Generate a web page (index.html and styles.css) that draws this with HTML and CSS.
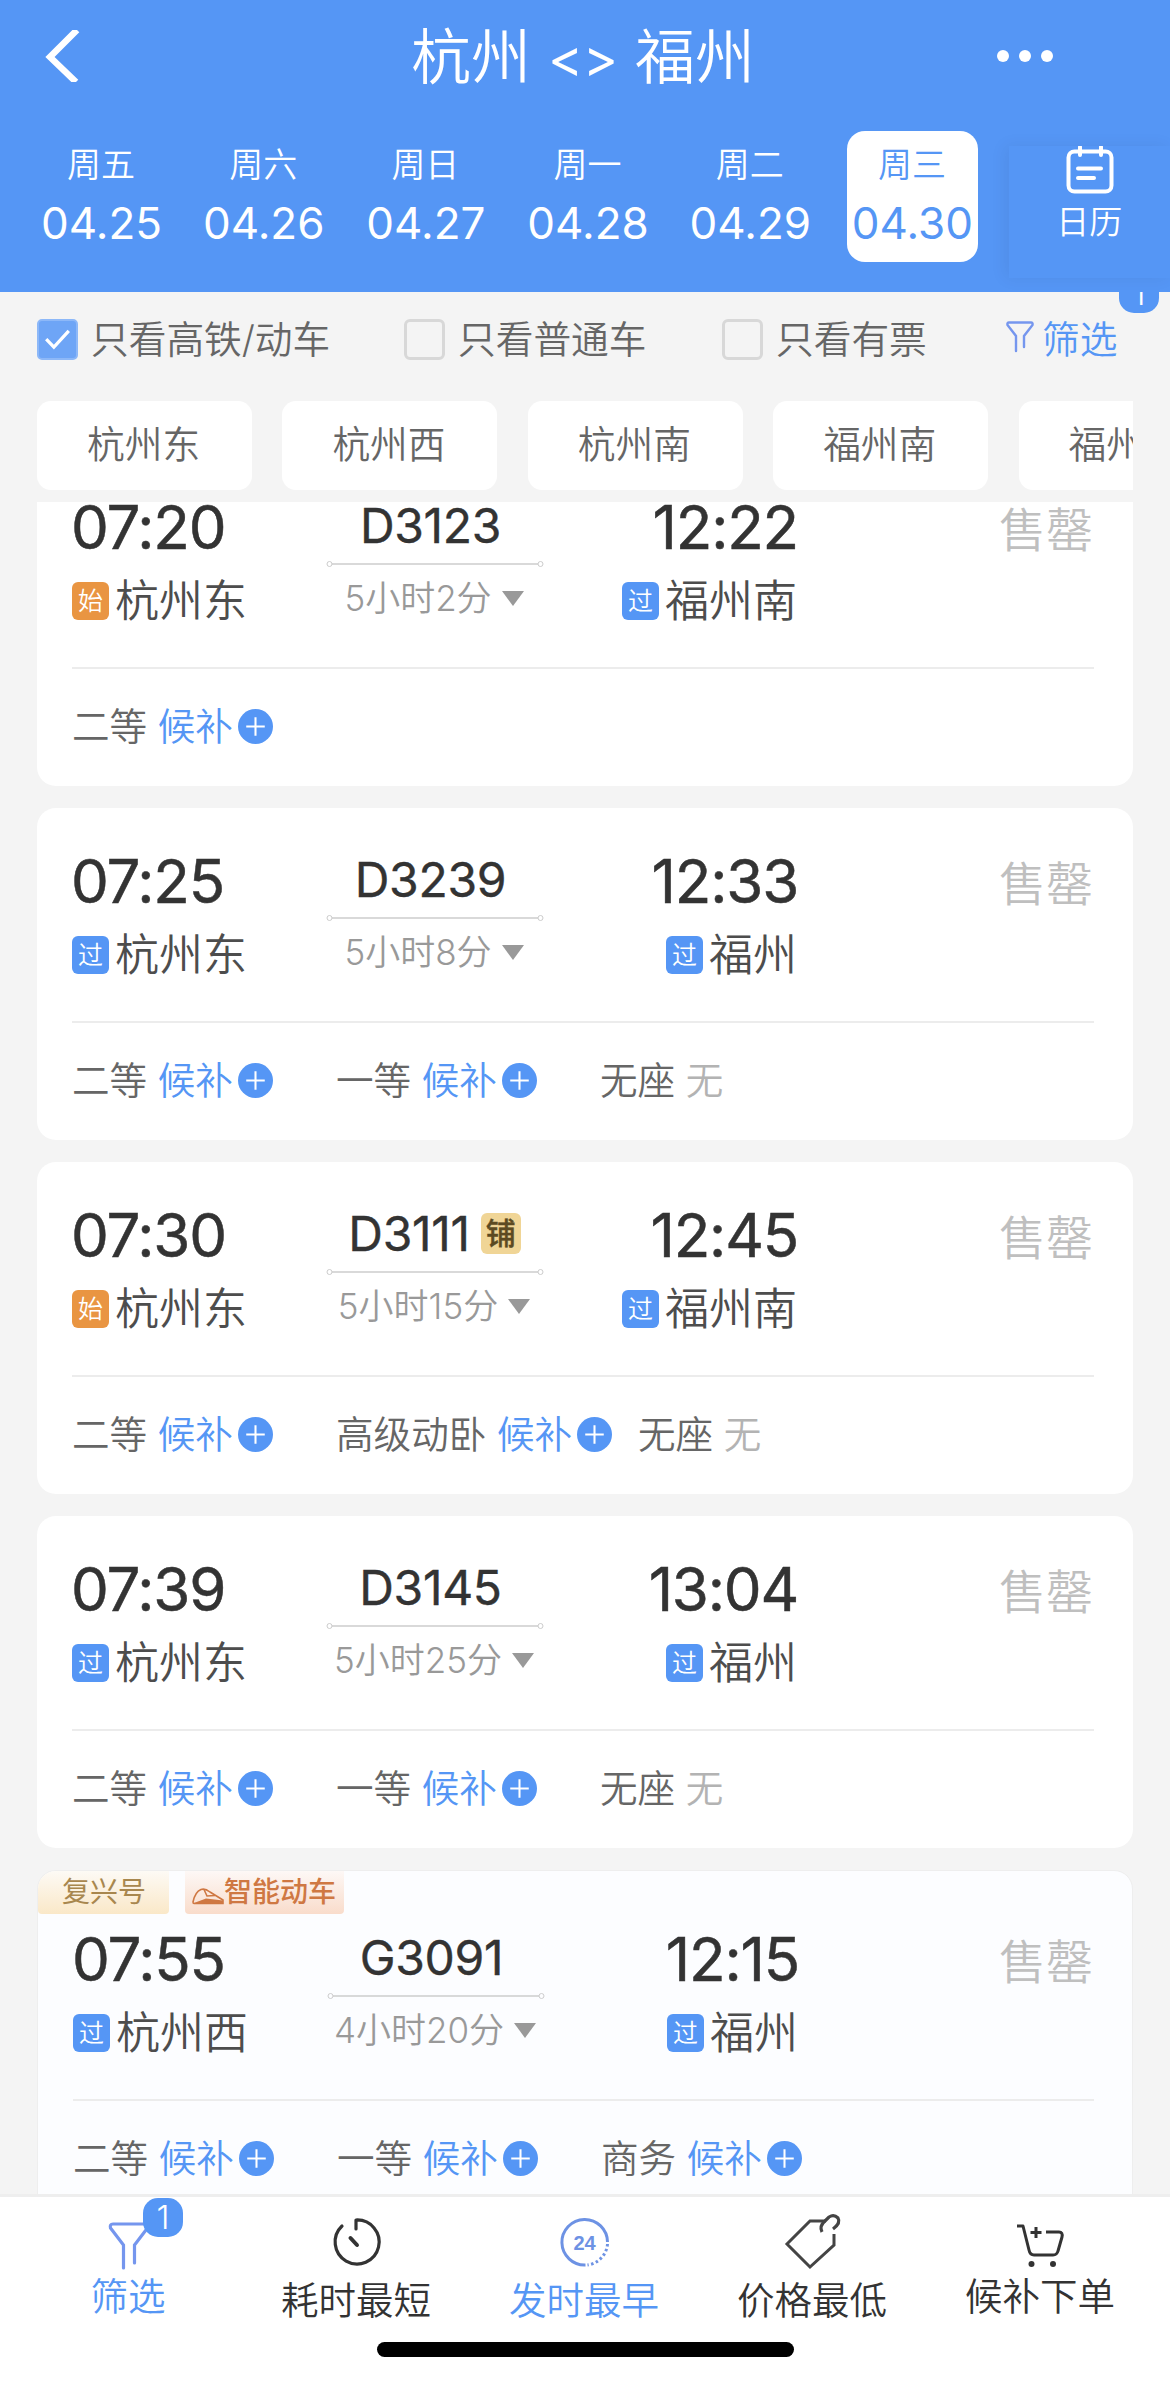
FILE: index.html
```html
<!DOCTYPE html>
<html lang="zh-CN">
<head>
    <meta charset="utf-8">
    <meta name="viewport" content="width=device-width, initial-scale=1">
    <title>杭州 - 福州</title>
    <link rel="stylesheet" href="styles.css">
</head>

<body>
    <!-- shared icons -->
    <svg class="defs" width="0" height="0">
        <symbol id="plus" viewBox="0 0 34 34">
            <circle cx="17" cy="17" r="17" fill="#5596f5"/>
            <path d="M17 8v18M8 17h18" stroke="#fff" stroke-width="2"/>
        </symbol>
        <symbol id="line" viewBox="0 0 218 8">
            <path d="M6 4h206" stroke="#ccc" stroke-width="1.3"/>
            <circle cx="3.5" cy="4" r="2.5" fill="none" stroke="#ccc"/>
            <circle cx="214.5" cy="4" r="2.5" fill="none" stroke="#ccc"/>
        </symbol>
        <symbol id="down" viewBox="0 0 22 15">
            <path d="M0 0h22L11 15z" fill="#999"/>
        </symbol>
    </svg>

    <div class="page">
        <header>
            <div class="titlebar">
                <svg class="back" viewBox="0 0 36 52"><path d="M32 0L5 27L31 52" fill="none" stroke="#fff" stroke-width="6.5"/></svg>
                <h1>杭州 <span>&lt;&gt;</span> 福州</h1>
                <svg class="more" viewBox="0 0 56 12"><circle cx="6" cy="6" r="6"/><circle cx="28" cy="6" r="6"/><circle cx="50" cy="6" r="6"/></svg>
            </div>
            <div class="dates">
                <div class="date"><span>周五</span><b>04.25</b></div>
                <div class="date"><span>周六</span><b>04.26</b></div>
                <div class="date"><span>周日</span><b>04.27</b></div>
                <div class="date"><span>周一</span><b>04.28</b></div>
                <div class="date"><span>周二</span><b>04.29</b></div>
                <div class="date active"><span>周三</span><b>04.30</b></div>
                <div class="calendar">
                    <svg width="48" height="48" viewBox="0 0 48 48" fill="none" stroke="#fff" stroke-width="4" stroke-linecap="round">
                        <rect x="2.5" y="5.5" width="43" height="40" rx="6"/>
                        <path d="M14 1v8M35 1v8M12 22.5h23M12 32h16"/>
                    </svg>
                    <span>日历</span>
                </div>
            </div>
        </header>

        <div class="filters">
            <div class="check on"><svg viewBox="0 0 41 41"><path d="M8 20l8.500 9L33 11" fill="none" stroke="#fff" stroke-width="3.600"/></svg>只看高铁/动车</div>
            <div class="check"><i></i>只看普通车</div>
            <div class="check"><i></i>只看有票</div>
            <div class="filter">
                <svg width="28" height="32" viewBox="0 0 28 32" fill="none" stroke="#7596ee" stroke-width="2.400" stroke-linecap="round"><path d="M10 30V15L1.500 4Q1 1.500 3 1.500h22Q27 1.500 26.500 4L18 15v11"/></svg>
                筛选
            </div>
            <em class="badge">1</em>
        </div>

        <div class="stations">
            <div>杭州东</div>
            <div>杭州西</div>
            <div>杭州南</div>
            <div>福州南</div>
            <div>福州</div>
        </div>

        <main>
            <div class="card first">
                <div class="trip">
                    <div class="depart">
                        <div class="time">07:20</div>
                        <div class="place"><i class="start">始</i>杭州东</div>
                    </div>
                    <div class="train">
                        <div class="no">D3123</div>
                        <svg class="line"><use href="#line"/></svg>
                        <div class="cost">5小时2分<svg><use href="#down"/></svg></div>
                    </div>
                    <div class="arrive">
                        <div class="time">12:22</div>
                        <div class="place"><i>过</i>福州南</div>
                    </div>
                    <div class="sold">售罄</div>
                </div>
                <div class="seats">
                    <div>二等 <a>候补</a><svg><use href="#plus"/></svg></div>
                </div>
            </div>

            <div class="card">
                <div class="trip">
                    <div class="depart">
                        <div class="time">07:25</div>
                        <div class="place"><i>过</i>杭州东</div>
                    </div>
                    <div class="train">
                        <div class="no">D3239</div>
                        <svg class="line"><use href="#line"/></svg>
                        <div class="cost">5小时8分<svg><use href="#down"/></svg></div>
                    </div>
                    <div class="arrive">
                        <div class="time">12:33</div>
                        <div class="place"><i>过</i>福州</div>
                    </div>
                    <div class="sold">售罄</div>
                </div>
                <div class="seats">
                    <div>二等 <a>候补</a><svg><use href="#plus"/></svg></div>
                    <div>一等 <a>候补</a><svg><use href="#plus"/></svg></div>
                    <div>无座 <s>无</s></div>
                </div>
            </div>

            <div class="card">
                <div class="trip">
                    <div class="depart">
                        <div class="time">07:30</div>
                        <div class="place"><i class="start">始</i>杭州东</div>
                    </div>
                    <div class="train">
                        <div class="no">D3111<i>铺</i></div>
                        <svg class="line"><use href="#line"/></svg>
                        <div class="cost">5小时15分<svg><use href="#down"/></svg></div>
                    </div>
                    <div class="arrive">
                        <div class="time">12:45</div>
                        <div class="place"><i>过</i>福州南</div>
                    </div>
                    <div class="sold">售罄</div>
                </div>
                <div class="seats">
                    <div>二等 <a>候补</a><svg><use href="#plus"/></svg></div>
                    <div>高级动卧 <a>候补</a><svg><use href="#plus"/></svg></div>
                    <div>无座 <s>无</s></div>
                </div>
            </div>

            <div class="card">
                <div class="trip">
                    <div class="depart">
                        <div class="time">07:39</div>
                        <div class="place"><i>过</i>杭州东</div>
                    </div>
                    <div class="train">
                        <div class="no">D3145</div>
                        <svg class="line"><use href="#line"/></svg>
                        <div class="cost">5小时25分<svg><use href="#down"/></svg></div>
                    </div>
                    <div class="arrive">
                        <div class="time">13:04</div>
                        <div class="place"><i>过</i>福州</div>
                    </div>
                    <div class="sold">售罄</div>
                </div>
                <div class="seats">
                    <div>二等 <a>候补</a><svg><use href="#plus"/></svg></div>
                    <div>一等 <a>候补</a><svg><use href="#plus"/></svg></div>
                    <div>无座 <s>无</s></div>
                </div>
            </div>

            <div class="card fuxing">
                <div class="tags">
                    <div class="tag gold">复兴号</div>
                    <div class="tag red">
                        <svg width="32" height="17" viewBox="0 0 32 17" fill="none" stroke="#cf7843" stroke-width="1.600"><path d="M1 14Q3 4 9 1.500Q13 0 18 4L31 12V15.500H2Q1 15.500 1 14z"/><path d="M12 1.500L15 8l8-.5"/><path d="M2 15L14 10.500L31 12.500V15.500z" fill="#cf7843" stroke="none"/></svg>智能动车
                    </div>
                </div>
                <div class="trip">
                    <div class="depart">
                        <div class="time">07:55</div>
                        <div class="place"><i>过</i>杭州西</div>
                    </div>
                    <div class="train">
                        <div class="no">G3091</div>
                        <svg class="line"><use href="#line"/></svg>
                        <div class="cost">4小时20分<svg><use href="#down"/></svg></div>
                    </div>
                    <div class="arrive">
                        <div class="time">12:15</div>
                        <div class="place"><i>过</i>福州</div>
                    </div>
                    <div class="sold">售罄</div>
                </div>
                <div class="seats">
                    <div>二等 <a>候补</a><svg><use href="#plus"/></svg></div>
                    <div>一等 <a>候补</a><svg><use href="#plus"/></svg></div>
                    <div>商务 <a>候补</a><svg><use href="#plus"/></svg></div>
                </div>
            </div>
        </main>

        <nav>
            <div class="tab blue high">
                <svg viewBox="0 0 60 60" fill="none" stroke="#7596ee" stroke-width="3.200" stroke-linecap="round"><path d="M24.500 51V28L11.500 11Q10.500 7 14 7h32Q49.500 7 48.500 11L35.500 28v18"/></svg>
                <em class="badge">1</em>
                <span>筛选</span>
            </div>
            <div class="tab">
                <svg viewBox="0 0 60 60" fill="none" stroke="#333" stroke-width="3.200" stroke-linecap="round" stroke-linejoin="round"><path d="M29 12V3A22 22 0 1 1 15 9"/><path d="M23.500 21L30 28" stroke-width="4"/></svg>
                <span>耗时最短</span>
            </div>
            <div class="tab blue">
                <svg viewBox="0 0 60 60" fill="none" stroke="#6d92e4" stroke-width="3"><path d="M52.500 25A22.800 22.800 0 1 0 30.500 48"/><path d="M52.500 27A23 23 0 0 1 32.500 48" stroke-dasharray="2.500 2.500"/><text x="29.500" y="32.500" text-anchor="middle">24</text></svg>
                <span>发时最早</span>
            </div>
            <div class="tab">
                <svg viewBox="0 0 60 60" fill="none" stroke="#444" stroke-width="3"><path d="M43 4H27L4 27L27 50L51 28V17"/><path d="M39 15Q36 9 42 4L46 0Q51-3 55 1Q58 6 50 12" stroke-width="3.200"/></svg>
                <span>价格最低</span>
            </div>
            <div class="tab high">
                <svg viewBox="0 0 60 60" fill="none" stroke="#333" stroke-width="3" stroke-linejoin="round"><path d="M6 9h6l6 24q1 5 5 5h19q4 0 5-4l4-14q1-5-3-5H35M25 10v11M19.500 15.500h11"/><g fill="#333" stroke="none"><circle cx="20.500" cy="47" r="3"/><circle cx="42" cy="47" r="3"/></g></svg>
                <span>候补下单</span>
            </div>
            <div class="home"></div>
        </nav>
    </div>
</body>
</html>
```
FILE: styles.css
```css
:root {
    --blue: #5596f5;
    --bg: #f4f4f4;
    --text: #333;
    --gray: #666;
}

* {
    box-sizing: border-box;
}
body {
    margin: 0;
    font-family: Inter, "Noto Sans CJK SC", sans-serif;
    font-weight: 350;
    color: var(--text);
    background-color: var(--bg);
}
i, em {
    font-style: normal;
}
.defs {
    position: absolute;
}
.page {
    display: flex;
    flex-direction: column;
    width: 1170px;
    height: 2381px;
    overflow: hidden;
}

/* header */
header {
    height: 292px;
    flex: none;
    color: #fff;
    background-color: var(--blue);
    overflow: hidden;
}
.titlebar {
    display: flex;
    align-items: center;
    height: 112px;
    padding-left: 45px;
}
.back {
    width: 36px;
    height: 52px;
}
h1 {
    width: 352px;
    margin: 5px 238px 0 326px;
    text-align: center;
    white-space: nowrap;
    font-size: 60px;
    font-weight: 350;
    line-height: 80px;
}
h1 span {
    position: relative;
    top: -2px;
    font-size: 53px;
    font-weight: 400;
}
.more {
    width: 56px;
    height: 12px;
    fill: #fff;
}
.dates {
    display: flex;
    gap: 31.2px;
    padding: 19px 0 0 36px;
}
.date {
    flex: none;
    width: 131px;
    height: 131px;
    padding-top: 14px;
    border-radius: 18px;
    text-align: center;
}
.date span {
    display: block;
    margin-left: -1px;
    font-size: 34px;
    line-height: 40px;
}
.date b {
    display: block;
    margin: 13px -10px 0;
    font-size: 44px;
    font-weight: 400;
    line-height: 50px;
}
.date.active {
    color: var(--blue);
    background-color: #fff;
}
.calendar {
    flex: none;
    display: flex;
    flex-direction: column;
    align-items: center;
    width: 162px;
    height: 132px;
    margin-top: 15px;
    background-color: var(--blue);
    box-shadow: -4px 0 16px rgba(0, 0, 0, 0.06);
    font-size: 33px;
    line-height: 40px;
}
.calendar span {
    margin: 8px 2px 0 0;
}

/* filters */
.filters {
    position: relative;
    display: flex;
    align-items: center;
    flex: none;
    height: 96px;
    padding: 0 0 3px 37px;
    overflow: hidden;
    font-size: 37.7px;
    line-height: 50px;
    color: var(--gray);
}
.check {
    display: flex;
    align-items: center;
    white-space: nowrap;
}
.check svg, .check i {
    width: 41px;
    height: 41px;
    margin: 1px 13px 0 0;
}
.check svg {
    background-color: #6ea5f6;
    border: 2px solid #8db8f8;
    border-radius: 5px;
}
.check i {
    border: 3px solid #d8d8d8;
    border-radius: 6px;
}
.check:nth-child(1) {
    width: 367px;
}
.check:nth-child(2) {
    width: 318px;
}
.check:nth-child(3) {
    width: 284px;
}
.filter {
    display: flex;
    align-items: center;
    gap: 8px;
    color: var(--blue);
}
.filter svg {
    margin-top: -4px;
}
.badge {
    position: absolute;
    width: 40px;
    height: 39px;
    border-radius: 15px;
    color: #fff;
    background-color: var(--blue);
    text-align: center;
    font-size: 33px;
    line-height: 39px;
}
.filters .badge {
    top: -18px;
    left: 1119px;
}

/* stations */
.stations {
    display: flex;
    flex: none;
    gap: 30.4px;
    width: 1096px;
    margin: 13px 37px 12px;
    overflow: hidden;
}
.stations div {
    flex: none;
    width: 215px;
    height: 89px;
    padding-left: 50px;
    border-radius: 14px;
    background-color: #fff;
    color: var(--gray);
    font-size: 37.7px;
    line-height: 86px;
}

/* train list */
main {
    flex: 1;
    min-height: 0;
    overflow: hidden;
    padding: 0 37px;
}
.card {
    height: 332px;
    margin-bottom: 22px;
    padding: 0 39px 0 35px;
    border-radius: 19px;
    background-color: #fff;
}
.card.first {
    margin-top: -48px;
}
.trip {
    display: grid;
    grid-template-columns: 256px 214px 255px 1fr;
    height: 215px;
    border-bottom: 2px solid #ececec;
}
.time {
    margin: 43px 0 0 -1px;
    font-size: 60px;
    font-weight: 400;
    line-height: 60px;
    letter-spacing: -1.2px;
    -webkit-text-stroke: 0.5px;
}
.arrive .time {
    margin-right: -1px;
}
.place {
    display: flex;
    align-items: center;
    margin-top: 22px;
    color: #4d4d4d;
    font-size: 44px;
    line-height: 44px;
}
.place i {
    width: 37px;
    height: 38px;
    margin: 0 6px 0 0;
    border-radius: 6px;
    background-color: var(--blue);
    color: #fff;
    text-align: center;
    font-size: 25px;
    line-height: 38px;
}
.place i.start {
    background-color: #e99542;
}
.arrive {
    text-align: right;
}
.arrive .place {
    justify-content: flex-end;
}
.train {
    text-align: center;
}
.no {
    display: flex;
    align-items: center;
    justify-content: center;
    margin: 47px 9px 0 0;
    font-size: 48px;
    font-weight: 400;
    line-height: 50px;
    letter-spacing: -0.3px;
    -webkit-text-stroke: 0.4px;
}
.no i {
    width: 40px;
    height: 41px;
    margin: -1px -8px 0 11px;
    border-radius: 6px;
    background-color: #f0d596;
    color: #5c4a22;
    font-size: 30px;
    font-weight: 500;
    line-height: 40px;
    letter-spacing: 0;
}
.line {
    display: block;
    width: 218px;
    height: 8px;
    margin: 9px 0 0 -2px;
}
.cost {
    display: flex;
    align-items: center;
    justify-content: center;
    margin: 10px 2px 0 0;
    color: #999;
    font-size: 35px;
    line-height: 40px;
    white-space: nowrap;
}
.cost svg {
    width: 22px;
    height: 15px;
    margin-left: 10px;
}
.sold {
    margin: 46px 1px 0 0;
    text-align: right;
    color: #bfbfbf;
    font-size: 47px;
    line-height: 60px;
}
.seats {
    display: flex;
    align-items: center;
    height: 115px;
    color: var(--gray);
    font-size: 37.6px;
    line-height: 50px;
}
.seats div {
    display: flex;
    align-items: center;
    min-width: 238px;
    margin-right: 26px;
    white-space: pre;
}
.seats a {
    color: var(--blue);
}
.seats s {
    color: #b3b3b3;
    text-decoration: none;
}
.seats svg {
    width: 35px;
    height: 35px;
    margin-left: 5px;
}

/* fuxing card */
.fuxing {
    position: relative;
    height: 350px;
    padding: 15px 38px 0 35px;
    border: 1px solid #eee;
    background-color: #fcfdff;
    overflow: hidden;
}
.tags {
    position: absolute;
    top: 0;
    left: 0;
    display: flex;
    gap: 16px;
}
.tag {
    height: 43px;
    border-radius: 0 0 4px 4px;
    font-size: 28px;
    font-weight: 400;
    line-height: 43px;
}
.gold {
    width: 131px;
    padding-left: 24px;
    color: #a8874e;
    background: linear-gradient(#fdfaf5, #fae8c8);
}
.red {
    display: flex;
    align-items: center;
    width: 159px;
    padding-left: 7px;
    color: #cf7843;
    font-weight: 500;
    background: linear-gradient(#fdf8f6, #f9dccb);
}
.red svg {
    margin-top: 8px;
}

/* bottom bar */
nav {
    position: relative;
    display: flex;
    flex: none;
    height: 187px;
    padding: 0 15px;
    border-top: 3px solid #eee;
    background-color: #fff;
}
.tab {
    position: relative;
    width: 228px;
    padding-top: 20px;
    text-align: center;
    font-size: 37.5px;
    line-height: 50px;
}
.tab svg {
    display: block;
    width: 60px;
    height: 60px;
    margin: 0 auto;
    overflow: visible;
}
.tab text {
    fill: #6d92e4;
    stroke: none;
    font-family: "Liberation Sans", sans-serif;
    font-size: 20px;
    font-weight: 700;
}
.tab span {
    display: block;
    margin: -1px 2px 0 0;
}
.tab.high span {
    margin-top: -5px;
}
.tab .badge {
    top: 1px;
    left: 128px;
}
.blue {
    color: var(--blue);
}
.home {
    position: absolute;
    left: 377px;
    bottom: 24px;
    width: 417px;
    height: 15px;
    border-radius: 8px;
    background-color: #000;
}
```
